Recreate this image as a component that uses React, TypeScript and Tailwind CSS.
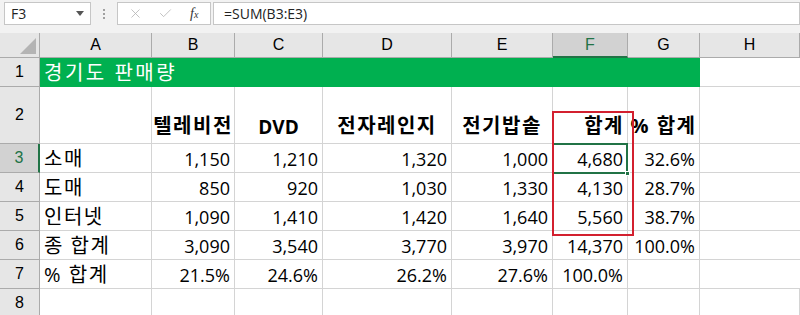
import { X, Check } from 'lucide-react';

const cols = ['A', 'B', 'C', 'D', 'E', 'F', 'G', 'H'];

const rows = [
  ['소매', '1,150', '1,210', '1,320', '1,000', '4,680', '32.6%'],
  ['도매', '850', '920', '1,030', '1,330', '4,130', '28.7%'],
  ['인터넷', '1,090', '1,410', '1,420', '1,640', '5,560', '38.7%'],
  ['종 합계', '3,090', '3,540', '3,770', '3,970', '14,370', '100.0%'],
  ['% 합계', '21.5%', '24.6%', '26.2%', '27.6%', '100.0%', ''],
];

const heads = ['', '텔레비전', 'DVD', '전자레인지', '전기밥솥', '합계', '% 합계'];

const font = { fontFamily: '"Open Sans", "Noto Sans CJK KR", sans-serif' };

function RowHead({ n, active }: { n: number; active?: boolean }) {
  return (
    <div
      className={`flex items-center justify-center border-b border-r text-[16px] ${
        active
          ? 'bg-[#d2d2d2] text-[#217346] border-r-2 border-r-[#217346] border-b-[#ababab]'
          : 'bg-[#e6e6e6] text-black border-[#ababab]'
      }`}
      style={{ fontFamily: '"Liberation Sans", Arial, sans-serif' }}
    >
      {n}
    </div>
  );
}

function FormulaBar() {
  return (
    <div className="flex h-[33px] items-start bg-[#f2f2f2] pt-[2px]">
      <div className="ml-[4px] flex h-[23px] w-[87px] items-center justify-between border border-[#c6c6c6] bg-white pl-[6px] pr-[6px] text-[14px] text-[#222]">
        <span style={{ fontFamily: '"Open Sans", sans-serif' }}>F3</span>
        <svg width="8" height="5" viewBox="0 0 8 5">
          <path d="M0 0h8L4 5z" fill="#555" />
        </svg>
      </div>
      <div className="flex w-[26px] flex-col items-center justify-center gap-[2px] pt-[7px]">
        <span className="h-[2px] w-[2px] bg-[#a0a0a0]" />
        <span className="h-[2px] w-[2px] bg-[#a0a0a0]" />
        <span className="h-[2px] w-[2px] bg-[#a0a0a0]" />
      </div>
      <div className="flex h-[23px] w-[94px] items-center border border-[#c6c6c6] bg-white pl-[10px]">
        <X size={15} strokeWidth={1.3} color="#b4b4b4" />
        <Check size={15} strokeWidth={1.3} color="#b4b4b4" className="ml-[15px]" />
        <span
          className="ml-[17px] text-[14px] italic text-[#333]"
          style={{ fontFamily: '"Liberation Serif", serif' }}
        >
          f<span className="text-[10px]">x</span>
        </span>
      </div>
      <div
        className="ml-[2px] flex h-[23px] flex-1 items-center border border-[#c6c6c6] bg-white pl-[10px] text-[14px] text-[#222]"
        style={{ fontFamily: '"Open Sans", sans-serif' }}
      >
        =SUM(B3:E3)
      </div>
    </div>
  );
}

export default function App() {
  return (
    <div className="h-[315px] w-[800px] overflow-hidden bg-white">
      <FormulaBar />
      <div className="relative">
        <div
          className="grid grid-cols-[40px_112px_83px_88px_129px_101px_75px_72px_1fr] grid-rows-[25px_29px_57px_29px_29px_29px_29px_29px_29px]"
          style={font}
        >
          {/* corner */}
          <div className="relative border-b border-r border-[#ababab] bg-[#e6e6e6]">
            <svg className="absolute bottom-[3px] right-[3px]" width="16" height="16" viewBox="0 0 16 16">
              <path d="M16 0V16H0z" fill="#b4b4b4" />
            </svg>
          </div>
          {cols.map((c) => (
            <div
              key={c}
              className={`flex items-center justify-center border-r text-[16px] ${
                c === 'F'
                  ? 'bg-[#d2d2d2] text-[#217346] border-b-2 border-b-[#217346] border-r-[#ababab]'
                  : 'bg-[#e6e6e6] text-black border-b border-[#ababab]'
              }`}
              style={{ fontFamily: '"Liberation Sans", Arial, sans-serif' }}
            >
              {c}
            </div>
          ))}

          {/* row 1 */}
          <RowHead n={1} />
          <div className="col-span-7 flex items-center bg-[#00b050] pl-[4px] text-[20px] tracking-[2.5px] text-white">
            경기도 판매량
          </div>
          <div className="border-b border-[#d4d4d4]" />

          {/* row 2 */}
          <RowHead n={2} />
          {heads.map((h, i) => (
            <div
              key={i}
              className={`flex items-end overflow-visible whitespace-nowrap border-b border-r border-[#d4d4d4] pb-[2px] font-bold ${
                i === 2 ? 'text-[19px]' : 'text-[20px] tracking-[1.5px]'
              } ${i === 5 ? 'justify-end pr-[3px]' : 'justify-center'}`}
            >
              {h}
            </div>
          ))}
          <div className="border-b border-[#d4d4d4]" />

          {/* rows 3-7 */}
          {rows.map((r, ri) => (
            <div key={ri} className="contents">
              <RowHead n={ri + 3} active={ri === 0} />
              {r.map((v, ci) => (
                <div
                  key={ci}
                  className={`flex items-center whitespace-nowrap border-b border-r border-[#d4d4d4] pt-[2px] ${
                    ci === 0
                      ? 'justify-start pl-[4px] text-[20px] tracking-[1.5px]'
                      : 'justify-end pr-[4px] text-[18px]'
                  }`}
                >
                  {v}
                </div>
              ))}
              <div className="border-b border-[#d4d4d4]" />
            </div>
          ))}

          {/* row 8 */}
          <RowHead n={8} />
          {cols.map((c) => (
            <div key={c} className="border-b border-r border-[#d4d4d4]" />
          ))}
        </div>

        {/* selection on F3 */}
        <div className="absolute left-[552px] top-[110px] h-[31px] w-[76px] border-2 border-[#217346]">
          <div className="absolute -bottom-[4px] -right-[4px] h-[5px] w-[5px] border border-white bg-[#217346]" />
        </div>
        {/* red outline */}
        <div className="absolute left-[552px] top-[78px] h-[125px] w-[82px] border-2 border-[#d3202f]" />
      </div>
    </div>
  );
}
